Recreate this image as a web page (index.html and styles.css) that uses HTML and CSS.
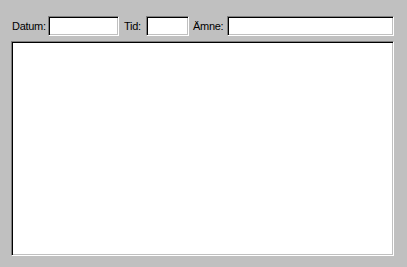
FILE: index.html
```html
<!DOCTYPE html>
<html lang="sv">
<head>
    <meta charset="UTF-8">
    <title>Anteckning</title>
    <link rel="stylesheet" href="styles.css">
</head>
<body>
    <div class="form">
        <div class="head">
            <label class="lbl lbl-datum" for="datum">Datum:</label>
            <input type="text" id="datum" class="field f-datum">
            <label class="lbl lbl-tid" for="tid">Tid:</label>
            <input type="text" id="tid" class="field f-tid">
            <label class="lbl lbl-amne" for="amne">Ämne:</label>
            <input type="text" id="amne" class="field f-amne">
        </div>
        <textarea class="field note" id="text"></textarea>
    </div>
</body>
</html>
```

FILE: styles.css
```css
body{
    margin: 0;
    background: #c0c0c0;
    font-family: "Liberation Sans", Arial, sans-serif;
    font-size: 11px;
    color: #000;
}
.form{display: flex; flex-direction: column; padding: 16px 0 0 11px;}
.head{display: flex; align-items: center; height: 20px;}
.lbl{flex: none; letter-spacing: -0.3px; white-space: nowrap;}
.lbl-datum{width: 36px; margin-left: 1px;}
.lbl-tid{width: 22px; margin-left: 5px;}
.lbl-amne{width: 34px; margin-left: 4px;}
.field{
    box-sizing: border-box;
    margin: 0;
    padding: 0 2px;
    background: #fff;
    border-top: 1px solid #808080;
    border-left: 1px solid #808080;
    border-bottom: 1px solid #fff;
    border-right: 1px solid #fff;
    box-shadow: inset 1px 1px #000, inset -1px -1px #c0c0c0;
    outline: none;
    font: inherit;
    border-radius: 0;
}
.f-datum{width: 71px; height: 20px;}
.f-tid{width: 43px; height: 20px;}
.f-amne{width: 167px; height: 20px;}
.note{width: 383px; height: 215px; margin-top: 5px; resize: none; overflow: hidden;}
```
